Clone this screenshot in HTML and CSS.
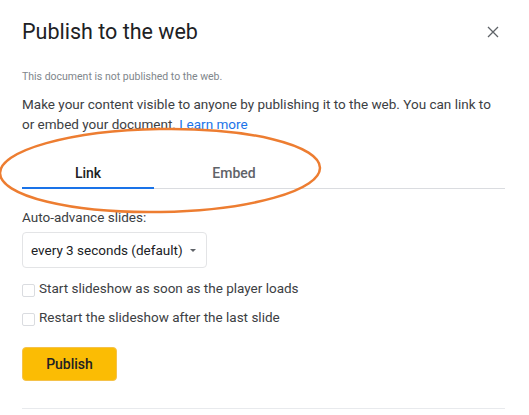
FILE: index.html
```html
<!DOCTYPE html>
<html lang="en">
<head>
<meta charset="utf-8">
<title>Publish to the web</title>
<link rel="stylesheet" href="styles.css">
</head>
<body>
<div class="dialog">
  <div class="header">
    <h1 class="title">Publish to the web</h1>
    <button class="close" aria-label="Close">
      <svg width="12" height="12" viewBox="0 0 12 12"><path d="M1 1L11 11M11 1L1 11" stroke="#5f6368" stroke-width="1.3" fill="none"/></svg>
    </button>
  </div>
  <p class="status">This document is not published to the web.</p>
  <p class="desc">Make your content visible to anyone by publishing it to the web. You can link to or embed your document. <a class="learn" href="#">Learn more</a></p>
  <div class="tabs">
    <div class="tab tab-link active">Link</div>
    <div class="tab tab-embed">Embed</div>
  </div>
  <div class="label">Auto-advance slides:</div>
  <div class="select"><span>every 3 seconds (default)</span><span class="caret"></span></div>
  <label class="check first"><span class="box"></span><span>Start slideshow as soon as the player loads</span></label>
  <label class="check"><span class="box"></span><span>Restart the slideshow after the last slide</span></label>
  <button class="publish">Publish</button>
  <div class="footer-line"></div>
</div>
<svg class="annotation" width="529" height="415" viewBox="0 0 529 415">
  <ellipse cx="160" cy="170.5" rx="160" ry="41.5" transform="rotate(-1 160 170.5)" fill="none" stroke="#ed7d31" stroke-width="2.5"/>
</svg>
</body>
</html>
```

FILE: styles.css
```css
html, body {
  margin: 0;
  padding: 0;
  background: #ffffff;
}
body {
  font-family: Roboto, "Liberation Sans", Arial, sans-serif;
  color: #3c4043;
  width: 529px;
  height: 415px;
  overflow: hidden;
  position: relative;
}
.dialog {
  padding: 18px 24px 0 22px;
}
.header {
  display: flex;
  justify-content: space-between;
  align-items: center;
}
.title {
  margin: 0;
  font-size: 21.5px;
  line-height: 28px;
  font-weight: 400;
  color: #202124;
}
.close {
  width: 24px;
  height: 24px;
  border: 0;
  padding: 0;
  background: none;
  display: flex;
  align-items: center;
  justify-content: center;
  margin-top: -1px;
}
.status {
  margin: 23px 0 0;
  font-size: 10.5px;
  line-height: 16px;
  color: #80868b;
}
.desc {
  margin: 9px 0 0;
  font-size: 13.5px;
  line-height: 20px;
  color: #3c4043;
}
.learn {
  color: #1a73e8;
  text-decoration: none;
}
.tabs {
  display: flex;
  margin-top: 15px;
  border-bottom: 1px solid #dadce0;
}
.tab {
  padding: 14px 0 4px;
  line-height: 20px;
  font-size: 14px;
  font-weight: 500;
  text-align: center;
  color: #5f6368;
  border-bottom: 2px solid transparent;
  margin-bottom: -1px;
}
.tab-link {
  width: 132px;
}
.tab-embed {
  width: 160px;
}
.tab.active {
  color: #202124;
  border-bottom-color: #1a73e8;
}
.label {
  margin-top: 18px;
  font-size: 13.5px;
  line-height: 20px;
  color: #3c4043;
}
.select {
  margin-top: 5px;
  width: 185px;
  height: 36px;
  box-sizing: border-box;
  border: 1px solid #e3e4e6;
  border-radius: 4px;
  display: flex;
  align-items: center;
  padding-left: 8px;
  font-size: 13.5px;
  color: #202124;
  gap: 7px;
}
.caret {
  width: 0;
  height: 0;
  border-left: 3.5px solid transparent;
  border-right: 3.5px solid transparent;
  border-top: 3.5px solid #5f6368;
}
.check {
  display: flex;
  align-items: flex-start;
  gap: 4px;
  font-size: 13.5px;
  line-height: 20px;
  color: #3c4043;
  margin-top: 9px;
}
.check.first {
  margin-top: 10px;
}
.box {
  width: 13px;
  height: 13px;
  box-sizing: border-box;
  border: 1px solid #dadce0;
  border-radius: 2px;
  margin-top: 6px;
  flex: none;
}
.publish {
  display: block;
  margin-top: 20px;
  width: 95px;
  height: 34px;
  border: 1px solid #f5c24a;
  border-radius: 4px;
  background: #fbbc04;
  font-family: Roboto, "Liberation Sans", Arial, sans-serif;
  font-size: 14px;
  font-weight: 500;
  color: #202124;
  padding: 0;
}
.footer-line {
  margin-top: 27px;
  height: 1px;
  background: #e8eaed;
}
.annotation {
  position: absolute;
  left: 0;
  top: 0;
  pointer-events: none;
}
```
